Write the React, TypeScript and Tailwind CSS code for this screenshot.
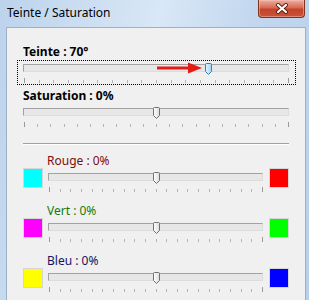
import type { CSSProperties } from 'react'

type SliderProps = {
  pos: number
  ticks: number
  hot?: boolean
  focused?: boolean
  arrow?: boolean
}

function Thumb({ hot, style }: { hot?: boolean; style: CSSProperties }) {
  return (
    <svg width="7" height="12" viewBox="0 0 7 12" className="absolute top-[-1px]" style={style}>
      <defs>
        <linearGradient id={hot ? 'thHot' : 'thCold'} x1="0" y1="0" x2="1" y2="0">
          <stop offset="0" stopColor={hot ? '#e4f4fc' : '#ffffff'} />
          <stop offset="1" stopColor={hot ? '#9fd5f1' : '#dcdcdc'} />
        </linearGradient>
      </defs>
      <path
        d="M0.5 1.5 Q0.5 0.5 1.5 0.5 H5.5 Q6.5 0.5 6.5 1.5 V8.5 L3.5 11.5 L0.5 8.5 Z"
        fill={`url(#${hot ? 'thHot' : 'thCold'})`}
        stroke={hot ? '#3c7fb1' : '#707070'}
        strokeWidth="1"
      />
    </svg>
  )
}

function Slider({ pos, ticks, hot, focused, arrow }: SliderProps) {
  return (
    <div className="relative">
      <div className="h-[8px] border border-t-[#a2a2a2] border-l-[#a2a2a2] border-r-[#dcdcdc] border-b-[#dcdcdc] bg-[#e7e7e7]" />
      <div className="relative mx-[1px] mt-[6px] h-[5px]">
        {Array.from({ length: ticks }).map((_, i) => {
          const end = i === 0 || i === ticks - 1
          return (
            <span
              key={i}
              className={
                end
                  ? 'absolute top-0 h-[5px] w-px bg-[#9a9a9a]'
                  : 'absolute top-[2px] h-[3px] w-px bg-[#b4b4b4]'
              }
              style={{ left: `${(i / (ticks - 1)) * 100}%` }}
            />
          )
        })}
      </div>
      <Thumb hot={hot || focused} style={{ left: `calc(${pos * 100}% - 3px)` }} />
      {arrow && (
        <svg width="46" height="12" viewBox="0 0 46 12" className="absolute left-[134px] top-[-2px]">
          <rect x="0" y="4.5" width="33" height="3" fill="#e41b17" />
          <polygon points="31,0.5 45,6 31,11.5" fill="#e41b17" />
        </svg>
      )}
    </div>
  )
}

function ColorRow({ label, color, left, right, pos }: { label: string; color: string; left: string; right: string; pos: number }) {
  return (
    <div className="h-[50px]">
      <div className={`pl-[24px] text-[12px] leading-[15px] ${color}`}>{label}</div>
      <div className="flex items-start">
        <div className={`h-[20px] w-[20px] border border-[#d6d6d6] ${left}`} />
        <div className="ml-[5px] mr-[6px] mt-[5px] flex-1">
          <Slider pos={pos} ticks={21} />
        </div>
        <div className={`h-[20px] w-[20px] border border-[#d6d6d6] ${right}`} />
      </div>
    </div>
  )
}

export default function App() {
  return (
    <div className="h-[300px] w-[309px] overflow-hidden bg-[linear-gradient(100deg,#bcd3ec,#d9e7f6_45%,#c3d8ef_70%,#b8cfe9)] font-['Noto_Sans',sans-serif] text-black">
      <div className="flex h-[27px] items-start">
        <div className="flex-1 pl-[7px] pt-[5px] text-[12px] leading-[15px]">Teinte / Saturation</div>
        <div className="mr-[4px] flex h-[18px] w-[47px] items-center justify-center rounded-b-[4px] border border-t-0 border-[#80321f] bg-[linear-gradient(180deg,#ebb1a3,#d86a52_45%,#c4432a_55%,#c9533a)] shadow-[inset_0_0_0_1px_rgba(255,200,190,0.45)]">
          <svg width="14" height="11" viewBox="0 0 14 11">
            <path d="M3 2 L11 9 M11 2 L3 9" stroke="#5a1d12" strokeWidth="4" strokeLinecap="round" />
            <path d="M3 2 L11 9 M11 2 L3 9" stroke="#ffffff" strokeWidth="2.2" strokeLinecap="round" />
          </svg>
        </div>
      </div>
      <div className="ml-[6px] mr-[3px] h-[273px] border-l border-r border-t border-[#9fb0c4] bg-[#f0f0f0] px-[16px] pt-[16px]">
        <div className="text-[12px] font-bold leading-[15px]">Teinte : 70°</div>
        <div className="-ml-[6px] -mr-[7px] mt-[1px] border border-dotted border-black pb-[1px] pl-[5px] pr-[6px] pt-[3px]">
          <Slider pos={250 / 360} ticks={19} focused arrow />
        </div>
        <div className="mt-[3px] text-[12px] font-bold leading-[15px]">Saturation : 0%</div>
        <div className="-ml-[6px] -mr-[7px] mt-[1px] border border-transparent pb-[1px] pl-[5px] pr-[6px] pt-[3px]">
          <Slider pos={0.5} ticks={21} />
        </div>
        <div className="mt-[14px] h-px bg-[#a0a0a0]" />
        <div className="h-px bg-white" />
        <div className="mt-[8px]">
          <ColorRow label="Rouge : 0%" color="text-[#7d0c0c]" left="bg-[#00ffff]" right="bg-[#ff0000]" pos={0.5} />
          <ColorRow label="Vert : 0%" color="text-[#0f7d0f]" left="bg-[#ff00ff]" right="bg-[#00ff00]" pos={0.5} />
          <ColorRow label="Bleu : 0%" color="text-[#14145e]" left="bg-[#ffff00]" right="bg-[#0000ff]" pos={0.5} />
        </div>
      </div>
    </div>
  )
}
